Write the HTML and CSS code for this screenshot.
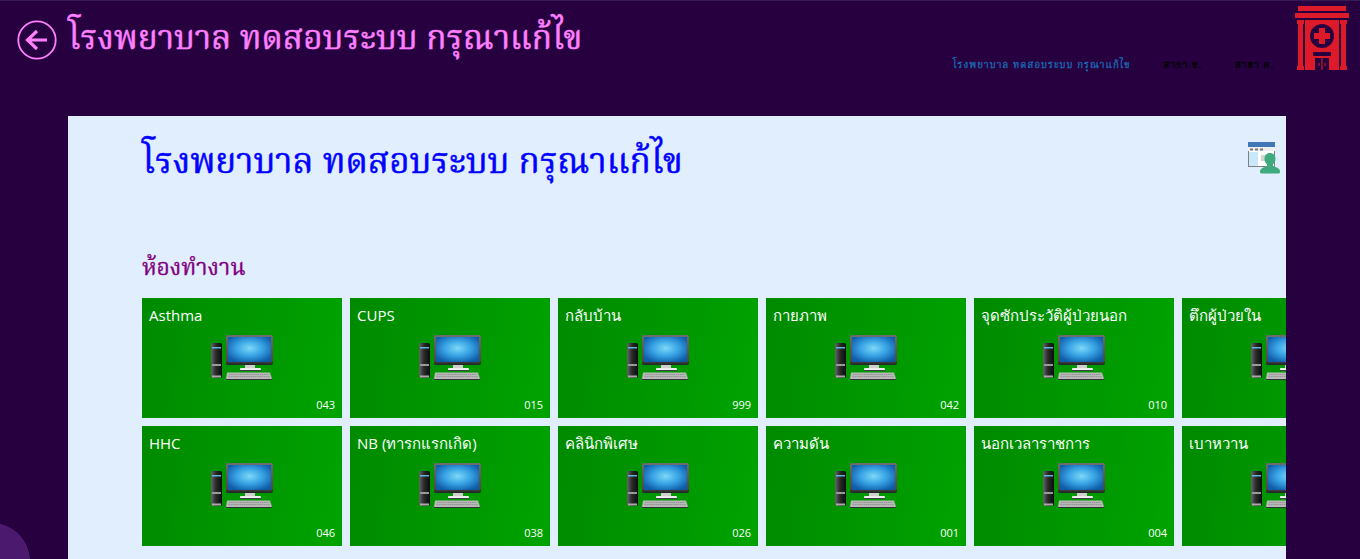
FILE: index.html
```html
<!DOCTYPE html>
<html lang="th">
<head>
    <meta charset="UTF-8">
    <meta name="viewport" content="width=device-width, initial-scale=1.0">
    <title>โรงพยาบาล ทดสอบระบบ กรุณาแก้ไข</title>
    <link rel="stylesheet" href="styles.css">
</head>
<body>

    <svg class="defs" width="0" height="0" aria-hidden="true">
        <defs>
            <radialGradient id="screenGlow" cx="50%" cy="45%" r="62%">
                <stop offset="0" stop-color="#7ad8f8"/>
                <stop offset="0.5" stop-color="#38a2e4"/>
                <stop offset="1" stop-color="#0c5ca6"/>
            </radialGradient>
            <linearGradient id="towerBody" x1="0" x2="1" y1="0" y2="0">
                <stop offset="0" stop-color="#666"/>
                <stop offset="0.45" stop-color="#2a2a2a"/>
                <stop offset="1" stop-color="#0c0c0c"/>
            </linearGradient>
            <linearGradient id="bezel" x1="0" x2="0" y1="0" y2="1">
                <stop offset="0" stop-color="#6e6e6e"/>
                <stop offset="0.85" stop-color="#4a4a4a"/>
                <stop offset="1" stop-color="#222"/>
            </linearGradient>
            <symbol id="pc" viewBox="0 0 64 46">
                <rect x="0" y="9" width="11" height="35" rx="2" fill="url(#towerBody)"/>
                <rect x="1" y="13" width="9" height="1.500" fill="#5fb4e0"/>
                <rect x="1" y="30" width="9" height="2" fill="#999"/>
                <rect x="1" y="41.500" width="9" height="2" fill="#aaa"/>
                <rect x="15" y="1" width="47" height="30" rx="2" fill="url(#bezel)"/>
                <rect x="17" y="3" width="43" height="25" fill="url(#screenGlow)"/>
                <rect x="34" y="31" width="10" height="3" fill="#cfcfcf"/>
                <rect x="29" y="34" width="21" height="2.500" rx="1" fill="#eee"/>
                <rect x="29" y="36" width="21" height="1" fill="#444"/>
                <path d="M16 38.500h43l2 6.500H15z" fill="#b8b8b8"/>
                <path d="M15 45h46v1H15z" fill="#333"/>
                <path d="M18 40.500h40M17.500 42.500h41" stroke="#8a8a8a" stroke-width="0.8" stroke-dasharray="1.500 0.700"/>
            </symbol>
        </defs>
    </svg>

    <div class="corner-blob"></div>

    <header class="top-bar">
        <div class="brand">
            <svg class="back-icon" viewBox="0 0 40 40">
                <circle cx="20" cy="20" r="18.700" fill="none" stroke="#ff80ff" stroke-width="1.800"/>
                <path d="M10 20H30M20 11l-9.500 9 9.500 9" fill="none" stroke="#ff80ff" stroke-width="3.200"/>
            </svg>
            <h1 class="brand-title">โรงพยาบาล ทดสอบระบบ กรุณาแก้ไข</h1>
        </div>
        <nav class="top-nav">
            <span class="nav-item nav-item-active">โรงพยาบาล ทดสอบระบบ กรุณาแก้ไข</span>
            <span class="nav-item">สาขา ข.</span>
            <span class="nav-item">สาขา ค.</span>
        </nav>
        <svg class="hospital-icon" viewBox="0 0 54 66">
            <rect x="3" y="0" width="48" height="5" fill="#dc1a2a"/>
            <rect x="0" y="7" width="54" height="5" fill="#dc1a2a"/>
            <path d="M2 14h7v4H8v42h1v4H2v-4h1V18H2zM45 14h7v4h-1v42h1v4h-7v-4h1V18h-1z" fill="#dc1a2a"/>
            <rect x="10" y="14" width="34" height="50" fill="#dc1a2a"/>
            <circle cx="27" cy="30" r="12" fill="#27003f"/>
            <path d="M24 22h6v5h5v6h-5v5h-6v-5h-5v-6h5z" fill="#dc1a2a"/>
            <rect x="18" y="46" width="18" height="4" rx="1" fill="#27003f"/>
            <path d="M20 52h6.500v12H20zM27.500 52H34v12h-6.500z" fill="#27003f"/>
            <path d="M24 57v3M30 57v3" stroke="#dc1a2a" stroke-width="1"/>
        </svg>
    </header>

    <main class="content">
        <div class="content-head">
            <h2 class="page-title">โรงพยาบาล ทดสอบระบบ กรุณาแก้ไข</h2>
            <svg class="user-icon" viewBox="0 0 33 32">
                <rect x="0.500" y="0.500" width="26" height="24" fill="#fff" stroke="#808080"/>
                <rect x="0" y="0" width="27" height="5" fill="#3f78b5"/>
                <rect x="0" y="5" width="27" height="4" fill="#eee"/>
                <path d="M2 6.500h3v2H2zM7 6.500h3v2H7zM12 6.500h3v2h-3z" fill="#777"/>
                <rect x="1" y="10" width="9" height="14" fill="#c9e8fa"/>
                <path d="M13 14h8M13 16h6M13 18h6" stroke="#aaa"/>
                <path d="M22 11c3.500 0 5.500 2.500 5.500 5.500 0 2.500-1 4.500-2.500 6v1.500c2 1.500 7 1.500 7 5.500v1c0 .5-1 1-2 1H14c-1 0-2-.5-2-1v-1c0-4 5-4 7-5.500v-1.500c-1.500-1.500-2.500-3.500-2.500-6 0-3 2-5.500 5.500-5.500z" fill="#3eaa7d"/>
            </svg>
        </div>

        <h3 class="section-title">ห้องทำงาน</h3>

        <div class="tile-row">
            <a class="tile"><span class="tile-name">Asthma</span><svg class="tile-icon"><use href="#pc"/></svg><span class="tile-code">043</span></a>
            <a class="tile"><span class="tile-name">CUPS</span><svg class="tile-icon"><use href="#pc"/></svg><span class="tile-code">015</span></a>
            <a class="tile"><span class="tile-name">กลับบ้าน</span><svg class="tile-icon"><use href="#pc"/></svg><span class="tile-code">999</span></a>
            <a class="tile"><span class="tile-name">กายภาพ</span><svg class="tile-icon"><use href="#pc"/></svg><span class="tile-code">042</span></a>
            <a class="tile"><span class="tile-name">จุดซักประวัติผู้ป่วยนอก</span><svg class="tile-icon"><use href="#pc"/></svg><span class="tile-code">010</span></a>
            <a class="tile"><span class="tile-name">ตึกผู้ป่วยใน</span><svg class="tile-icon"><use href="#pc"/></svg><span class="tile-code"></span></a>
        </div>
        <div class="tile-row">
            <a class="tile"><span class="tile-name">HHC</span><svg class="tile-icon"><use href="#pc"/></svg><span class="tile-code">046</span></a>
            <a class="tile"><span class="tile-name">NB (ทารกแรกเกิด)</span><svg class="tile-icon"><use href="#pc"/></svg><span class="tile-code">038</span></a>
            <a class="tile"><span class="tile-name">คลินิกพิเศษ</span><svg class="tile-icon"><use href="#pc"/></svg><span class="tile-code">026</span></a>
            <a class="tile"><span class="tile-name">ความดัน</span><svg class="tile-icon"><use href="#pc"/></svg><span class="tile-code">001</span></a>
            <a class="tile"><span class="tile-name">นอกเวลาราชการ</span><svg class="tile-icon"><use href="#pc"/></svg><span class="tile-code">004</span></a>
            <a class="tile"><span class="tile-name">เบาหวาน</span><svg class="tile-icon"><use href="#pc"/></svg><span class="tile-code"></span></a>
        </div>
    </main>

</body>
</html>
```

FILE: styles.css
```css
html, body {
    margin: 0;
    height: 559px;
    overflow: hidden;
}
body {
    background-color: #27003f;
    border-top: 1px solid #3a1a55;
    box-sizing: border-box;
    font-family: "Open Sans", "Noto Sans", sans-serif;
    position: relative;
}
.defs {
    position: absolute;
}
.corner-blob {
    position: absolute;
    left: 0;
    bottom: 0;
    width: 32px;
    height: 36px;
    background: radial-gradient(circle 38px at -8px 38px, #4b1a6e 99%, transparent 100%);
}

/* Top bar */
.top-bar {
    height: 115px;
    display: flex;
    align-items: flex-start;
    position: relative;
}
.brand {
    display: flex;
    align-items: center;
    gap: 11px;
    padding: 17px 0 0 17px;
}
.back-icon {
    width: 40px;
    height: 40px;
}
.brand-title {
    margin: 0;
    padding-top: 3px;
    font-size: 33.3px;
    font-weight: normal;
    -webkit-text-stroke: 0.5px #ff80ff;
    line-height: 40px;
    color: #ff80ff;
    font-family: "Noto Serif Thai", serif;
}
.top-nav {
    margin-left: auto;
    display: flex;
    gap: 33px;
    padding: 57px 21px 0 0;
}
.nav-item {
    font-size: 9.7px;
    letter-spacing: 1px;
    color: #000;
    -webkit-text-stroke: 0.3px #000;
    font-family: "Noto Serif Thai", serif;
}
.nav-item-active {
    color: #1a6bb5;
    -webkit-text-stroke: 0.3px #1a6bb5;
}
.hospital-icon {
    width: 54px;
    height: 66px;
    margin: 5px 11px 0 0;
}

/* Main panel */
.content {
    margin: 0 74px 0 68px;
    height: 443px;
    background-color: #e1eefe;
    overflow: hidden;
    padding-left: 74px;
}
.content-head {
    display: flex;
    justify-content: space-between;
    height: 82px;
    padding-top: 10px;
}
.page-title {
    margin: 0;
    padding-top: 3px;
    font-size: 35px;
    line-height: 70px;
    font-weight: normal;
    -webkit-text-stroke: 0.5px #0000ff;
    color: #0000ff;
    font-family: "Noto Serif Thai", serif;
}
.user-icon {
    width: 33px;
    height: 32px;
    margin: 16px 5px 0 0;
}
.section-title {
    margin: 44px 0 12px;
    font-size: 23px;
    line-height: 34px;
    font-weight: normal;
    -webkit-text-stroke: 0.3px #800080;
    color: #800080;
    font-family: "Noto Serif Thai", serif;
}
.tile-row {
    display: flex;
    gap: 8px;
    margin-bottom: 8px;
}
.tile {
    flex: none;
    width: 200px;
    height: 120px;
    background: linear-gradient(100deg, #008a00, #00a300);
    position: relative;
    color: #fff;
}
.tile-name {
    position: absolute;
    left: 7px;
    top: 6px;
    font-size: 15px;
    line-height: 22px;
}
.tile-icon {
    position: absolute;
    left: 69px;
    top: 36px;
    width: 64px;
    height: 46px;
}
.tile-code {
    position: absolute;
    right: 7px;
    bottom: 6px;
    font-size: 11px;
    line-height: 14px;
}
```
